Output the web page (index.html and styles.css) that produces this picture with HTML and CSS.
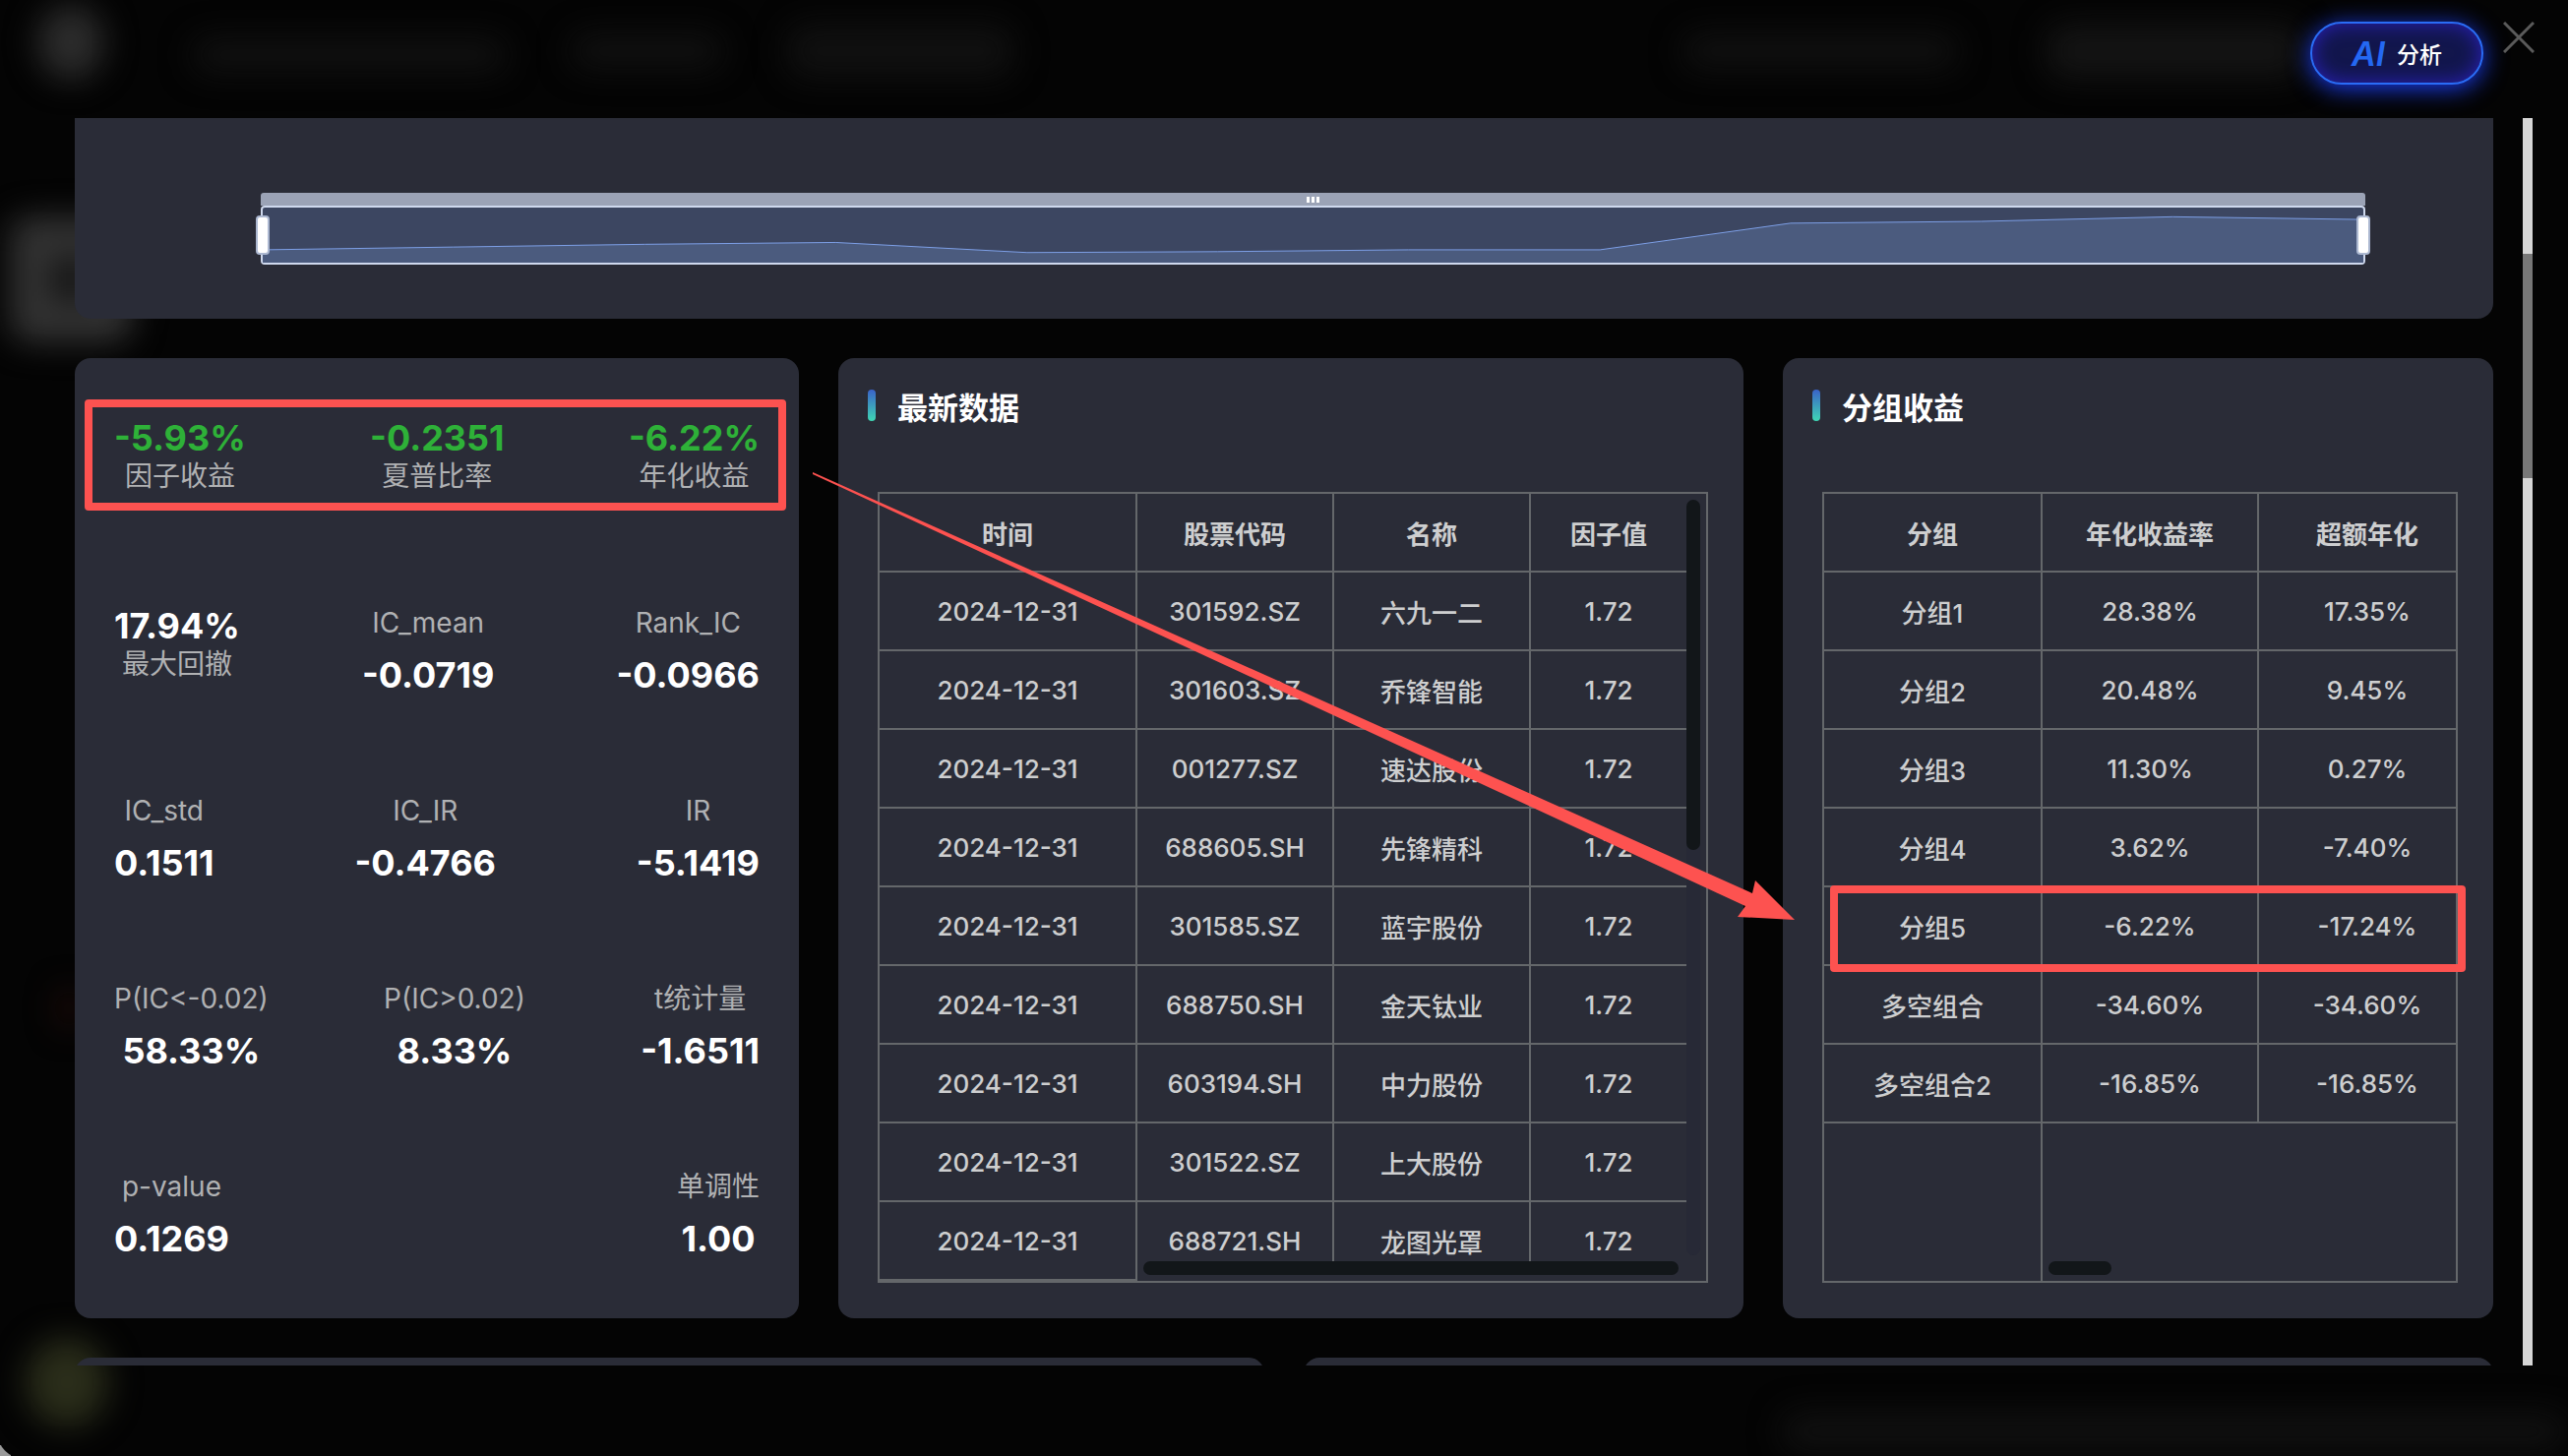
FILE: index.html
```html
<!DOCTYPE html>
<html lang="zh-CN">
<head>
  <meta charset="UTF-8">
  <title>因子分析</title>
  <link rel="stylesheet" href="styles.css">
</head>
<body>
  <!-- 弹窗背后的模糊页面 -->
  <div class="backdrop" aria-hidden="true">
    <i class="blob avatar"></i>
    <i class="blob name"></i>
    <i class="blob menu-a"></i>
    <i class="blob menu-b"></i>
    <i class="blob menu-c"></i>
    <i class="blob menu-d"></i>
    <i class="blob frame"></i>
    <i class="blob green"></i>
    <i class="blob red"></i>
    <i class="blob footer"></i>
    <i class="corner"></i>
  </div>

  <div class="modal">
    <header class="modal-header">
      <button class="ai-btn" type="button"><span class="ai">AI</span>分析</button>
      <button class="close-btn" type="button" aria-label="关闭">
        <svg width="32" height="32" viewBox="0 0 32 32"><path d="M1 1L31 31M31 1L1 31"/></svg>
      </button>
    </header>

    <main class="modal-body">
      <div class="content">
        <section class="card chart-card">
          <div class="zoom-bar">
            <div class="zoom-move"><i></i><i></i><i></i></div>
            <div class="zoom-area">
              <svg viewBox="0 0 2138 60" preserveAspectRatio="none">
                <path class="area" d="M0 46L194 43L389 40L583 38L778 49L972 48L1166 46L1361 46L1555 17L1749 15L1944 10L2138 13V60H0Z"/>
                <path class="line" d="M0 46L194 43L389 40L583 38L778 49L972 48L1166 46L1361 46L1555 17L1749 15L1944 10L2138 13"/>
              </svg>
              <span class="handle handle-left"></span>
              <span class="handle handle-right"></span>
            </div>
          </div>
        </section>

        <div class="cards">
          <section class="card stats">
            <div class="stat-row">
              <div class="stat"><b class="value down">-5.93%</b><span class="label">因子收益</span></div>
              <div class="stat"><b class="value down">-0.2351</b><span class="label">夏普比率</span></div>
              <div class="stat"><b class="value down">-6.22%</b><span class="label">年化收益</span></div>
            </div>
            <div class="stat-row">
              <div class="stat"><b class="value">17.94%</b><span class="label">最大回撤</span></div>
              <div class="stat stat-top"><span class="label">IC_mean</span><b class="value">-0.0719</b></div>
              <div class="stat stat-top"><span class="label">Rank_IC</span><b class="value">-0.0966</b></div>
            </div>
            <div class="stat-row">
              <div class="stat stat-top"><span class="label">IC_std</span><b class="value">0.1511</b></div>
              <div class="stat stat-top"><span class="label">IC_IR</span><b class="value">-0.4766</b></div>
              <div class="stat stat-top"><span class="label">IR</span><b class="value">-5.1419</b></div>
            </div>
            <div class="stat-row">
              <div class="stat stat-top"><span class="label">P(IC&lt;-0.02)</span><b class="value">58.33%</b></div>
              <div class="stat stat-top"><span class="label">P(IC&gt;0.02)</span><b class="value">8.33%</b></div>
              <div class="stat stat-top"><span class="label">t统计量</span><b class="value">-1.6511</b></div>
            </div>
            <div class="stat-row">
              <div class="stat stat-top"><span class="label">p-value</span><b class="value">0.1269</b></div>
              <div class="stat stat-top"><span class="label">单调性</span><b class="value">1.00</b></div>
            </div>
            <div class="mark mark-stats"></div>
          </section>

          <section class="card">
            <h2 class="title">最新数据</h2>
            <div class="table-wrap">
              <table class="latest">
                <colgroup><col class="c-date"><col class="c-mid"><col class="c-mid"><col></colgroup>
                <thead>
                  <tr><th>时间</th><th>股票代码</th><th>名称</th><th>因子值</th></tr>
                </thead>
                <tbody>
                  <tr><td>2024-12-31</td><td>301592.SZ</td><td>六九一二</td><td>1.72</td></tr>
                  <tr><td>2024-12-31</td><td>301603.SZ</td><td>乔锋智能</td><td>1.72</td></tr>
                  <tr><td>2024-12-31</td><td>001277.SZ</td><td>速达股份</td><td>1.72</td></tr>
                  <tr><td>2024-12-31</td><td>688605.SH</td><td>先锋精科</td><td>1.72</td></tr>
                  <tr><td>2024-12-31</td><td>301585.SZ</td><td>蓝宇股份</td><td>1.72</td></tr>
                  <tr><td>2024-12-31</td><td>688750.SH</td><td>金天钛业</td><td>1.72</td></tr>
                  <tr><td>2024-12-31</td><td>603194.SH</td><td>中力股份</td><td>1.72</td></tr>
                  <tr><td>2024-12-31</td><td>301522.SZ</td><td>上大股份</td><td>1.72</td></tr>
                  <tr><td>2024-12-31</td><td>688721.SH</td><td>龙图光罩</td><td>1.72</td></tr>
                </tbody>
              </table>
              <div class="scroll-y"><i></i></div>
              <div class="scroll-x scroll-latest"><i></i></div>
            </div>
          </section>

          <section class="card">
            <h2 class="title">分组收益</h2>
            <div class="table-wrap">
              <table class="groups">
                <colgroup><col class="c-group"><col class="c-rate"><col></colgroup>
                <thead>
                  <tr><th>分组</th><th>年化收益率</th><th>超额年化</th></tr>
                </thead>
                <tbody>
                  <tr><td>分组1</td><td>28.38%</td><td>17.35%</td></tr>
                  <tr><td>分组2</td><td>20.48%</td><td>9.45%</td></tr>
                  <tr><td>分组3</td><td>11.30%</td><td>0.27%</td></tr>
                  <tr><td>分组4</td><td>3.62%</td><td>-7.40%</td></tr>
                  <tr><td>分组5</td><td>-6.22%</td><td>-17.24%</td></tr>
                  <tr><td>多空组合</td><td>-34.60%</td><td>-34.60%</td></tr>
                  <tr><td>多空组合2</td><td>-16.85%</td><td>-16.85%</td></tr>
                  <tr class="rest"><td></td><td colspan="2"></td></tr>
                </tbody>
              </table>
              <div class="scroll-x scroll-groups"><i></i></div>
            </div>
            <div class="mark mark-group"></div>
          </section>

          <svg class="arrow" viewBox="0 0 2458 976" preserveAspectRatio="none" aria-hidden="true">
            <path d="M750 116L1705 544L1708 531L1748 571L1690 568L1698 557L750 118Z"/>
          </svg>
        </div>

        <div class="next-cards">
          <section class="card"></section>
          <section class="card"></section>
        </div>
      </div>
      <div class="page-scroll"><i></i></div>
    </main>
  </div>
</body>
</html>
```
FILE: styles.css
```css
* {
  box-sizing: border-box;
}
body {
  margin: 0;
  height: 100vh;
  overflow: hidden;
  background: #040404;
  color: #fff;
  font-family: Inter, "Noto Sans CJK SC", sans-serif;
}

/* backdrop */
.backdrop {
  position: absolute;
  inset: 0;
  overflow: hidden;
}
.blob {
  position: absolute;
  border-radius: 20px;
  background: #101010;
  filter: blur(16px);
}
.avatar {
  left: 38px;
  top: 5px;
  width: 68px;
  height: 76px;
  border-radius: 50%;
  background: #2c2c2c;
}
.name {
  left: 195px;
  top: 38px;
  width: 320px;
  height: 36px;
}
.menu-a {
  left: 580px;
  top: 34px;
  width: 155px;
  height: 36px;
}
.menu-b {
  left: 800px;
  top: 25px;
  width: 230px;
  height: 54px;
}
.menu-c {
  left: 1710px;
  top: 34px;
  width: 280px;
  height: 36px;
}
.menu-d {
  left: 2080px;
  top: 25px;
  width: 260px;
  height: 54px;
  background: #141414;
}
.frame {
  left: 10px;
  top: 220px;
  width: 124px;
  height: 128px;
  background: #141414;
  border: 42px solid #323232;
}
.green {
  left: 26px;
  top: 1360px;
  width: 84px;
  height: 90px;
  border-radius: 50%;
  background: #2a2d1a;
}
.red {
  left: 60px;
  top: 1005px;
  width: 20px;
  height: 40px;
  background: #200a08;
}
.footer {
  left: 1810px;
  right: 0;
  bottom: 5px;
  height: 40px;
}
/* light desktop showing past the rounded window corner */
.corner {
  position: absolute;
  left: 0;
  bottom: 0;
  width: 11px;
  height: 11px;
  background: radial-gradient(circle at 24px -13px, transparent 26px, #9a9a9a 27px);
}

/* modal */
.modal {
  position: relative;
  display: flex;
  flex-direction: column;
  height: 100vh;
  padding-bottom: 92px;
}
.modal-header {
  display: flex;
  flex: none;
  justify-content: flex-end;
  align-items: flex-start;
  gap: 20px;
  height: 120px;
  padding: 22px 34px 0 0;
}
.ai-btn {
  display: flex;
  align-items: center;
  justify-content: center;
  gap: 12px;
  width: 176px;
  height: 64px;
  padding: 0;
  border: 2px solid #2a6cf6;
  border-radius: 32px;
  background: #12164c;
  box-shadow: 0 4px 24px #1a3cf0, inset 0 0 20px #2a20b8;
  color: #fff;
  font-family: inherit;
  font-size: 23px;
  font-weight: 500;
  cursor: pointer;
}
.ai {
  color: #2468f2;
  font-size: 34px;
  font-style: italic;
  font-weight: 600;
}
.close-btn {
  padding: 0;
  border: none;
  background: none;
  cursor: pointer;
}
.close-btn svg {
  display: block;
  fill: none;
  stroke: #5a5a5a;
  stroke-width: 3;
}
.modal-body {
  display: flex;
  flex: 1;
  min-height: 0;
  padding-right: 36px;
  overflow: hidden;
}
.content {
  flex: 1;
  padding: 0 30px 0 76px;
}
.page-scroll {
  width: 10px;
  padding-top: 138px;
  background: #d6d6d6;
}
.page-scroll i {
  display: block;
  height: 228px;
  background: #777;
}

/* cards */
.card {
  position: relative;
  border-radius: 16px;
  background: #2a2c37;
}
.chart-card {
  height: 204px;
  margin-bottom: 40px;
  padding: 76px 130px 0 189px;
  border-radius: 0 0 16px 16px;
}
.zoom-move {
  display: flex;
  align-items: center;
  justify-content: center;
  gap: 2px;
  height: 13px;
  border-radius: 3px 3px 0 0;
  background: #9ba3b6;
}
.zoom-move i {
  width: 3px;
  height: 6px;
  background: #fff;
}
.zoom-area {
  position: relative;
  height: 60px;
  border: 2px solid #cfd9ee;
  border-radius: 4px;
  background: #3c4661;
}
.zoom-area svg {
  display: block;
  width: 100%;
  height: 100%;
}
.area {
  fill: #4b5b7e;
}
.line {
  fill: none;
  stroke: #7d9fe6;
  stroke-width: 1;
  vector-effect: non-scaling-stroke;
}
.handle {
  position: absolute;
  top: 8px;
  width: 14px;
  height: 40px;
  border: 2px solid #acb8d1;
  border-radius: 4px;
  background: #fff;
}
.handle-left {
  left: -7px;
}
.handle-right {
  right: -7px;
}
.cards {
  position: relative;
  display: grid;
  grid-template-columns: 368fr 460fr 361fr;
  gap: 40px;
  margin-bottom: 40px;
}
.next-cards {
  display: grid;
  grid-template-columns: 1fr 1fr;
  gap: 40px;
}
.next-cards .card {
  height: 600px;
}

/* stats */
.stats {
  display: flex;
  flex-direction: column;
  justify-content: space-between;
  padding: 59px 40px;
}
.stat-row {
  display: flex;
  justify-content: space-between;
  height: 94px;
}
.stat {
  display: flex;
  flex-direction: column;
  align-items: center;
}
.value {
  font-size: 36px;
  line-height: 44px;
  font-weight: 700;
}
.down {
  color: #2eb138;
}
.label {
  color: #b0b1b3;
  font-size: 28px;
  line-height: 34px;
}
.stat-top {
  gap: 12px;
}
.stat-top .label {
  line-height: 38px;
}

/* tables */
.title {
  display: flex;
  align-items: center;
  gap: 22px;
  height: 32px;
  margin: 32px 30px 72px;
  font-size: 31px;
  font-weight: 600;
}
.title::before {
  content: "";
  width: 8px;
  height: 32px;
  border-radius: 4px;
  background: linear-gradient(#3a62c8, #3fd6b4);
}
.table-wrap {
  position: relative;
  height: 804px;
  margin: 0 36px 36px 40px;
  border: 2px solid #64676a;
  overflow: hidden;
}
table {
  table-layout: fixed;
  border-collapse: separate;
  border-spacing: 0;
  color: #cdcecf;
  font-size: 26px;
}
.latest {
  width: calc(100% - 20px);
}
.groups {
  width: calc(100% + 20px);
}
.c-date {
  width: 262px;
}
.c-mid {
  width: 200px;
}
.c-group {
  width: 222px;
}
.c-rate {
  width: 220px;
}
th,
td {
  height: 80px;
  padding: 0;
  border-right: 2px solid #64676a;
  border-bottom: 2px solid #64676a;
  font-weight: 500;
  text-align: center;
  white-space: nowrap;
}
th {
  font-weight: 700;
}
th:last-child,
td:last-child {
  border-right: none;
}
.rest td {
  height: 160px;
  border-bottom: none;
}
.scroll-y {
  position: absolute;
  top: 6px;
  right: 6px;
  bottom: 26px;
  width: 14px;
  border-radius: 7px;
  background: #272936;
}
.scroll-x {
  position: absolute;
  right: 0;
  bottom: 0;
  height: 20px;
  background: #2a2c37;
}
.scroll-latest {
  left: 262px;
  padding: 0 28px 0 6px;
}
.scroll-groups {
  left: 222px;
  padding: 0 6px;
}
.scroll-y i,
.scroll-x i {
  display: block;
  height: 14px;
  border-radius: 7px;
  background: #121619;
}
.scroll-y i {
  height: 356px;
}
.scroll-groups i {
  width: 64px;
}

/* red annotations */
.mark {
  position: absolute;
  border: 8px solid #fd5250;
  border-radius: 4px;
}
.mark-stats {
  top: 42px;
  left: 10px;
  right: 13px;
  height: 113px;
}
.mark-group {
  top: 536px;
  left: 48px;
  right: 28px;
  height: 88px;
}
.arrow {
  position: absolute;
  inset: 0;
  width: 100%;
  height: 100%;
  fill: #fd5250;
}
```
